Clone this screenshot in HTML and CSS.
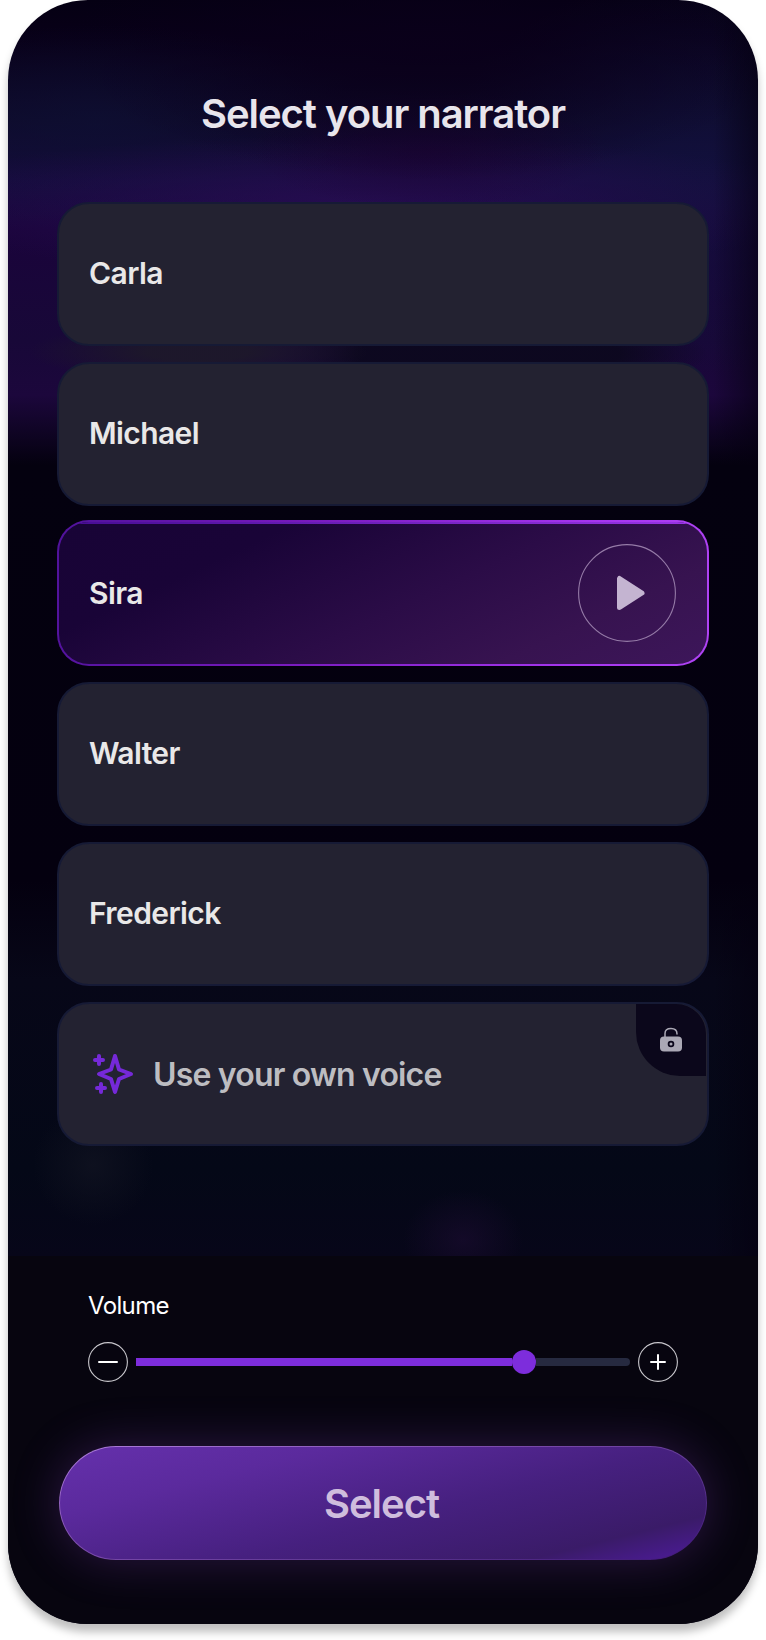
FILE: index.html
```html
<!DOCTYPE html>
<html lang="en">
<head>
<meta charset="utf-8">
<title>Select your narrator</title>
<link rel="stylesheet" href="styles.css">
</head>
<body>
<main class="phone">
  <h1 class="title">Select your narrator</h1>
  <ul class="narrators">
    <li class="card"><span>Carla</span></li>
    <li class="card"><span>Michael</span></li>
    <li class="card selected">
      <span>Sira</span>
      <button class="play" aria-label="Play">
        <svg width="98" height="98" viewBox="0 0 98 98">
          <circle cx="49" cy="49" r="48.4" fill="none" stroke="#957ba7" stroke-width="1.1"/>
          <path d="M41.5 34.5 V63.5 L64 49 Z" fill="#c4b4d1" stroke="#c4b4d1" stroke-width="5" stroke-linejoin="round"/>
        </svg>
      </button>
    </li>
    <li class="card"><span>Walter</span></li>
    <li class="card"><span>Frederick</span></li>
    <li class="card own">
      <svg class="sparkle" width="44" height="44" viewBox="0 0 44 44" fill="none" stroke="#7529d8" stroke-width="4" stroke-linecap="round" stroke-linejoin="round">
        <path d="M24 4 L28 17.500 L40 22 L28 27 L24 40 L20 27 L8 22 L20 17.500 Z"/>
        <path d="M4 8 H12 M8 4 V12 M6 36 H14 M10 32 V40"/>
      </svg>
      <span>Use your own voice</span>
      <span class="lock">
        <svg width="22" height="26" viewBox="0 0 22 26">
          <path d="M5 11 V6.500 C5 2.700 7.500 1.600 11 1.600 C14.500 1.600 17 2.700 17 7" fill="none" stroke="#aaa8b5" stroke-width="1.500" stroke-linecap="round"/>
          <rect y="9.500" width="22" height="15" rx="4" fill="#aaa8b5"/>
          <circle cx="11" cy="17" r="2.400" fill="none" stroke="#0b071b" stroke-width="1.800"/>
        </svg>
      </span>
    </li>
  </ul>
  <footer class="footer">
    <div class="label">Volume</div>
    <div class="volume">
      <svg width="40" height="40" viewBox="0 0 40 40" fill="none" stroke="#fff" stroke-linecap="round">
        <circle cx="20" cy="20" r="19.400" stroke="#c8c7cc" stroke-width="1.100"/>
        <path d="M11 20 H29" stroke-width="2"/>
      </svg>
      <div class="track"><div class="fill"></div><div class="knob"></div><div class="rest"></div></div>
      <svg width="40" height="40" viewBox="0 0 40 40" fill="none" stroke="#fff" stroke-linecap="round">
        <circle cx="20" cy="20" r="19.400" stroke="#c8c7cc" stroke-width="1.100"/>
        <path d="M13 20 H27 M20 13 V27" stroke-width="2"/>
      </svg>
    </div>
    <button class="select">Select</button>
  </footer>
</main>
</body>
</html>
```
FILE: styles.css
```css
* { box-sizing: border-box; }
body {
  margin: 0;
  min-height: 1640px;
  background: #fff;
  font-family: Inter, "Liberation Sans", sans-serif;
}
.phone {
  width: 750px;
  height: 1624px;
  margin: 0 8px;
  border-radius: 80px;
  overflow: hidden;
  display: flex;
  flex-direction: column;
  box-shadow: 0 8px 8px rgba(0, 0, 0, .25);
  background:
    linear-gradient(90deg, transparent 94%, rgba(4, 0, 15, .6) 100%),
    radial-gradient(ellipse 60px 50px at 455px 1240px, rgba(26, 12, 48, .65), transparent),
    radial-gradient(ellipse 60px 60px at 85px 1165px, rgba(18, 20, 34, .7), transparent),
    radial-gradient(ellipse 170px 30px at 190px 352px, rgba(29, 24, 42, .95) 30%, transparent),
    radial-gradient(ellipse 220px 40px at 480px 354px, rgba(12, 8, 30, .95) 60%, transparent),
    radial-gradient(ellipse 360px 130px at 420px 50px, rgba(10, 0, 26, .9), transparent),
    radial-gradient(ellipse 180px 60px at 420px 150px, rgba(28, 3, 52, .7), transparent),
    radial-gradient(ellipse 480px 70px at 350px 205px, rgba(40, 14, 84, .8), transparent),
    radial-gradient(ellipse 280px 100px at 90px 125px, rgba(14, 16, 52, .7), transparent),
    radial-gradient(ellipse 260px 200px at 690px 175px, rgba(17, 17, 60, .85), transparent),
    linear-gradient(180deg, #050013 0, #080018 40px, #0e0929 120px, #160b3e 180px, #1a043b 230px, #180838 340px, #1c073c 395px, #04010f 465px, #04000f 880px, #070718 980px, #040817 1170px, #070619 1256px);
}
.title {
  margin: 0;
  height: 202px;
  padding-top: 90px;
  text-align: center;
  font-size: 40px;
  line-height: 48px;
  font-weight: 560;
  letter-spacing: -1.05px;
  color: #e8e5ec;
}
.narrators {
  list-style: none;
  margin: 0;
  padding: 0 49px;
  height: 1054px;
  display: flex;
  flex-direction: column;
  gap: 16px;
}
.card {
  position: relative;
  flex: none;
  height: 144px;
  padding: 0 30px 2px;
  border: 2px solid #161a35;
  border-radius: 32px;
  background: #232231;
  display: flex;
  align-items: center;
  font-size: 30px;
  font-weight: 560;
  letter-spacing: -.6px;
  color: #e9e8e8;
}
.selected {
  height: 146px;
  margin-top: -2px;
  padding: 0 31px 0 30px;
  justify-content: space-between;
  border-color: transparent;
  background:
    linear-gradient(90deg, #450c92, #9b35e8) 0 0 / 100% 2px no-repeat padding-box,
    linear-gradient(155deg, #180436 0, #190437 25%, #2b0c47 55%, #371350 78%, #3d165a 100%) padding-box,
    linear-gradient(100deg, #50129b, #7619bb 35%, #a636ef 80%, #b043f5) border-box;
}
.play {
  width: 98px;
  height: 98px;
  padding: 0;
  border: 0;
  background: none;
  display: grid;
}
.own {
  padding: 0 32px;
  font-size: 32px;
  letter-spacing: -.82px;
  color: #bdbdc1;
}
.sparkle { margin-right: 18px; }
.lock {
  position: absolute;
  top: 0;
  right: 1px;
  width: 70px;
  height: 72px;
  border-radius: 0 30px 0 44px;
  background: #0b071b;
  display: grid;
  place-items: center;
}
.footer {
  height: 368px;
  padding: 36px 51px 0;
  background: #07050f;
}
.label {
  padding-left: 29px;
  font-size: 24px;
  line-height: 28px;
  height: 30px;
  letter-spacing: -.65px;
  color: #fff;
}
.volume {
  margin: 20px 29px 64px;
  display: flex;
  gap: 8px;
  align-items: center;
}
.track {
  flex: 1;
  display: flex;
  align-items: center;
}
.fill {
  width: 376px;
  height: 8px;
  background: #7d2ddc;
}
.knob {
  width: 24px;
  height: 24px;
  border-radius: 50%;
  background: #7d2ddc;
}
.rest {
  flex: 1;
  height: 8px;
  border-radius: 0 4px 4px 0;
  background: #262a40;
}
.select {
  display: block;
  width: 648px;
  height: 114px;
  padding: 0 3px 0 0;
  border: 1.5px solid transparent;
  border-radius: 57px;
  background:
    linear-gradient(166deg, #632fa9 5%, #5b2a9d 25%, #46207f 57%, #3a1b68 84%, #4a1b92 97%) padding-box,
    linear-gradient(166deg, #ae7edb, #7b4bab 40%, #56318a 75%, #401778) border-box;
  box-shadow: 0 0 48px rgba(120, 60, 180, .32);
  font: 600 40px Inter, "Liberation Sans", sans-serif;
  letter-spacing: -1px;
  color: #cfbddd;
}
```
